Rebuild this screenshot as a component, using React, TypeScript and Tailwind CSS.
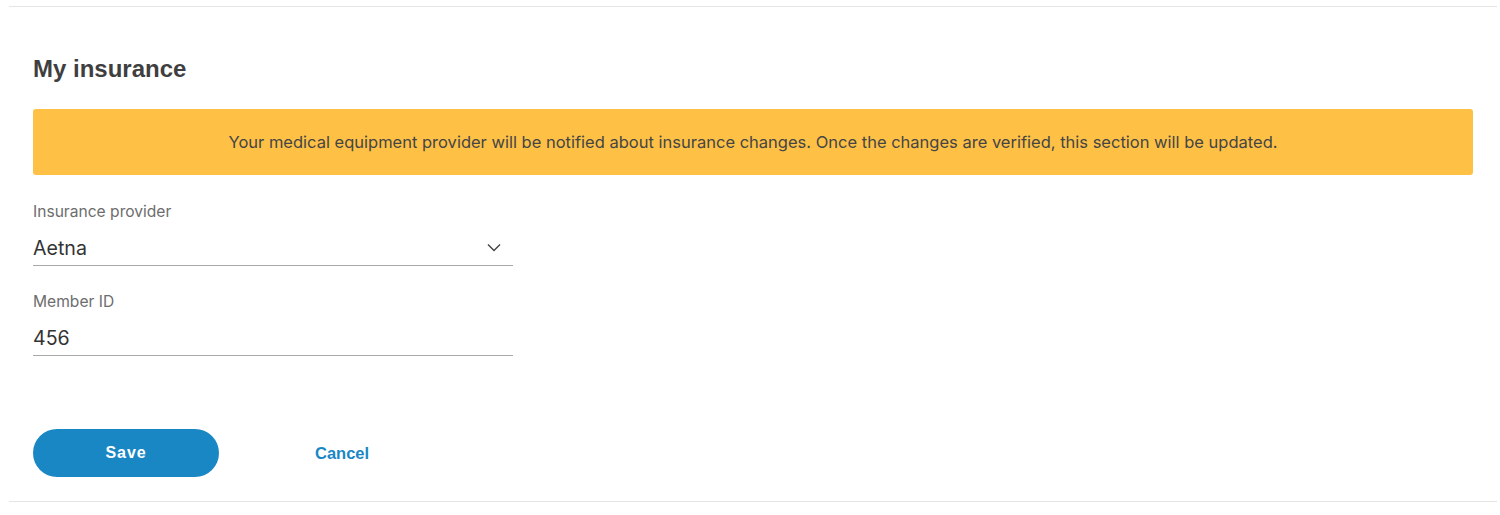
import React from 'react';

const Field: React.FC<{ label: string; value: string; select?: boolean }> = ({ label, value, select }) => (
    <div className="w-[480px] font-['Inter',sans-serif]">
        <div className="text-[15.6px] leading-[18px] text-[#6d6d6d]">{label}</div>
        <div className="mt-[15px] flex h-[30px] items-start justify-between border-b border-[#a9a9a9]">
            <span className="text-[19.6px] leading-[24px] text-[#333333]">{value}</span>
            {select && (
                <svg width="14" height="9" viewBox="0 0 14 9" className="mt-[7px] mr-[12px]" fill="none">
                    <path d="M1 1.5l6 6 6-6" stroke="#444444" strokeWidth="1.4" />
                </svg>
            )}
        </div>
    </div>
);

export default function App() {
    return (
        <div className="min-h-[515px] bg-white pl-[9px] pr-[3px] pt-[6px] font-['Liberation_Sans',Arial,sans-serif]">
            <div className="border-t border-b border-[#e5e5e5] px-[24px] pt-[48px] pb-[24px]">
                <h2 className="text-[24px] font-bold leading-[28px] text-[#3f3f3f]">My insurance</h2>
                <div className="mt-[26px] flex h-[66px] items-center justify-center rounded-[3px] bg-[#fec145] font-['Inter',sans-serif] text-[16.5px] text-[#454545]">
                    Your medical equipment provider will be notified about insurance changes. Once the changes are verified, this section will be updated.
                </div>
                <div className="mt-[28px] flex flex-col gap-[27px]">
                    <Field label="Insurance provider" value="Aetna" select />
                    <Field label="Member ID" value="456" />
                </div>
                <div className="mt-[73px] flex items-center">
                    <button className="h-[48px] w-[186px] rounded-full bg-[#1a87c5] text-[16px] font-bold tracking-[0.06em] text-white">
                        Save
                    </button>
                    <button className="ml-[96px] text-[16.5px] font-bold text-[#1a87c5]">Cancel</button>
                </div>
            </div>
        </div>
    );
}
